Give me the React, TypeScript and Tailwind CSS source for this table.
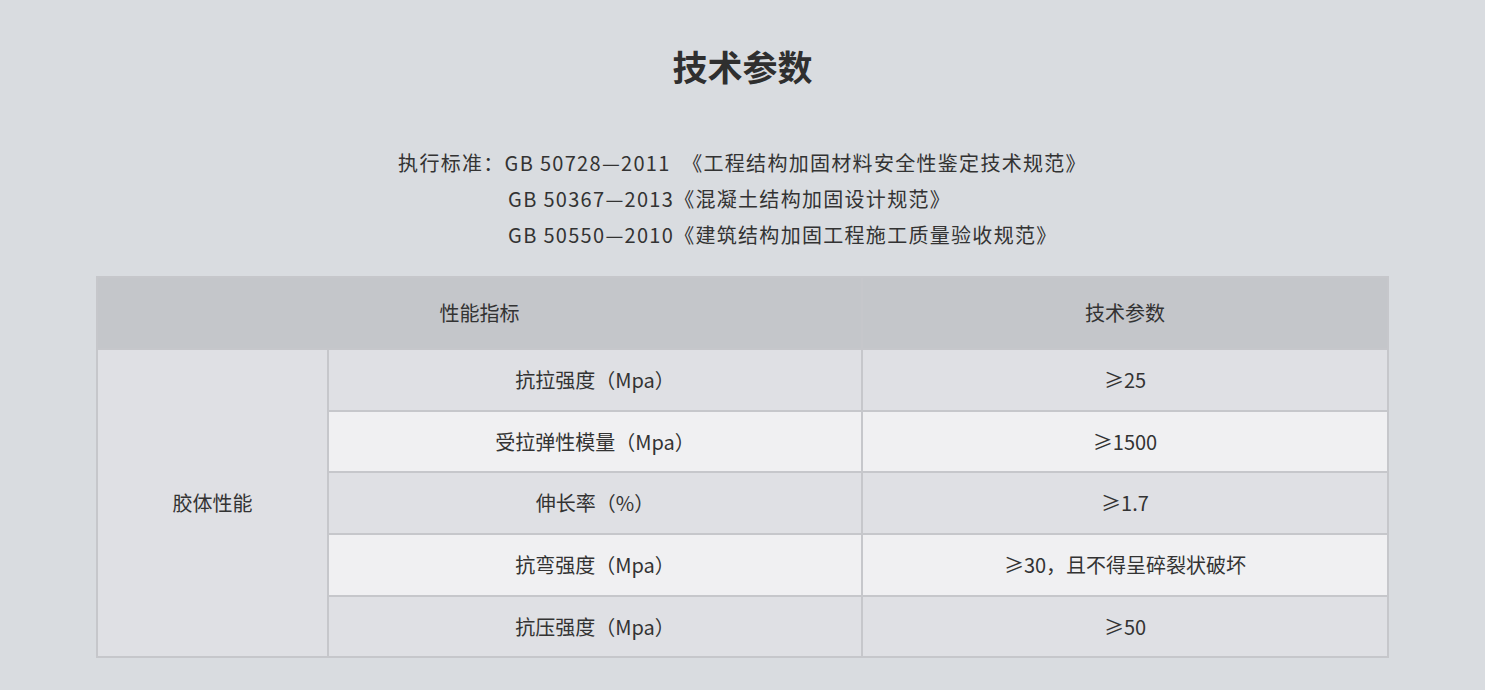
import React from 'react'

const rows = [
  { name: '抗拉强度（Mpa）', value: '≥25', bg: 'bg-[#dfe0e4]' },
  { name: '受拉弹性模量（Mpa）', value: '≥1500', bg: 'bg-[#f0f0f2]' },
  { name: '伸长率（%）', value: '≥1.7', bg: 'bg-[#dfe0e4]' },
  { name: '抗弯强度（Mpa）', value: '≥30，且不得呈碎裂状破坏', bg: 'bg-[#f0f0f2]' },
  { name: '抗压强度（Mpa）', value: '≥50', bg: 'bg-[#dfe0e4]' },
]

const heights = ['h-[62px]', 'h-[61px]', 'h-[62px]', 'h-[62px]', 'h-[61px]']

export default function App() {
  return (
    <div
      className="min-h-[690px] w-full bg-[#d9dce0] text-[#333] pt-[42px]"
      style={{ fontFamily: '"Noto Sans CJK SC", "Noto Sans", sans-serif' }}
    >
      {/* Title */}
      <h2 className="text-center text-[35px] font-bold leading-[48px] text-[#2f2f2f]">技术参数</h2>

      {/* Standards */}
      <div className="mt-[55px] flex justify-center">
        <div className="text-[20px] leading-[36px] tracking-[1.3px] text-[#333]">
          <div>执行标准：GB 50728—2011 &nbsp;《工程结构加固材料安全性鉴定技术规范》</div>
          <div className="pl-[110px]">GB 50367—2013《混凝土结构加固设计规范》</div>
          <div className="pl-[110px]">GB 50550—2010《建筑结构加固工程施工质量验收规范》</div>
        </div>
      </div>

      {/* Table */}
      <div className="mt-[23px] flex justify-center">
        <table className="w-[1291px] table-fixed border-collapse border-2 border-[#c6c7cb] text-[20px] text-[#333]">
          <colgroup>
            <col className="w-[231px]" />
            <col className="w-[534px]" />
            <col className="w-[526px]" />
          </colgroup>
          <thead>
            <tr className="h-[72px] bg-[#c4c6ca]">
              <th colSpan={2} className="border-2 border-[#c6c7cb] font-normal text-center">性能指标</th>
              <th className="border-2 border-[#c6c7cb] font-normal text-center">技术参数</th>
            </tr>
          </thead>
          <tbody>
            {rows.map((r, i) => (
              <tr key={r.name} className={heights[i]}>
                {i === 0 && (
                  <td rowSpan={5} className="border-2 border-[#c6c7cb] bg-[#dfe0e4] text-center">
                    胶体性能
                  </td>
                )}
                <td className={`border-2 border-[#c6c7cb] text-center ${r.bg}`}>{r.name}</td>
                <td className={`border-2 border-[#c6c7cb] text-center ${r.bg}`}>{r.value}</td>
              </tr>
            ))}
          </tbody>
        </table>
      </div>
    </div>
  )
}
